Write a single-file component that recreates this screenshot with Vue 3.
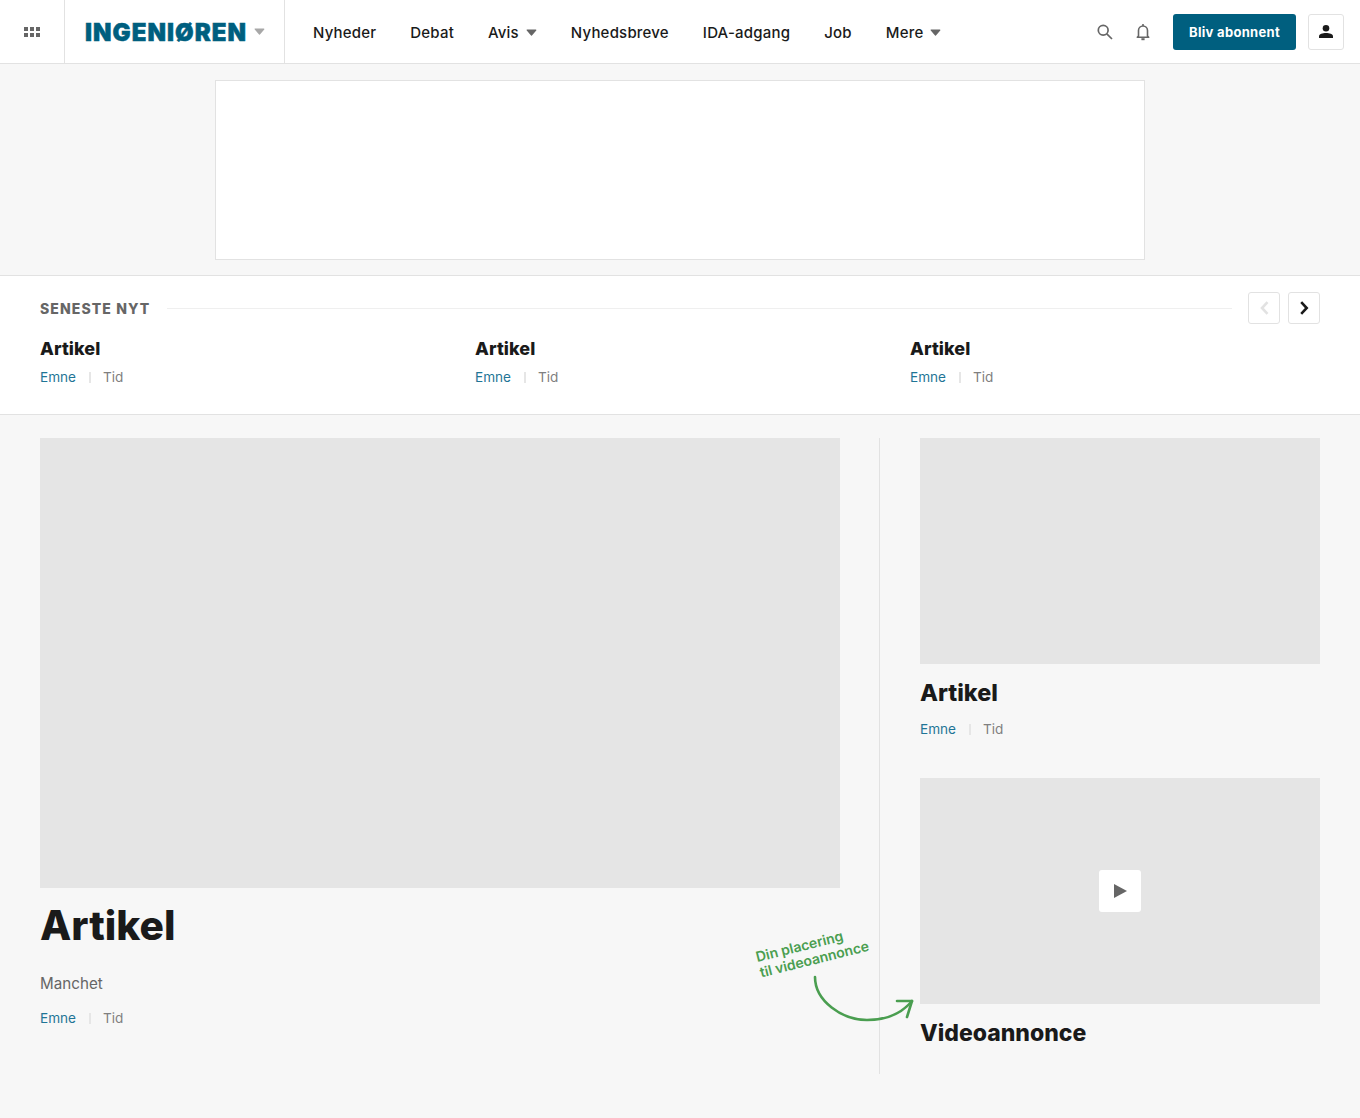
<template>
  <div class="page">
    <header class="topbar">
      <button class="grid-btn" aria-label="Menu">
        <svg width="16" height="11" viewBox="0 0 16 11" fill="#666">
          <rect x="0" y="0" width="4" height="4" /><rect x="6" y="0" width="4" height="4" /><rect x="12" y="0" width="4" height="4" />
          <rect x="0" y="6" width="4" height="4" /><rect x="6" y="6" width="4" height="4" /><rect x="12" y="6" width="4" height="4" />
        </svg>
      </button>
      <div class="brand">
        <span class="logo">INGENIØREN</span>
        <svg class="caret" width="11" height="7" viewBox="0 0 11 7"><path d="M1.2 1h8.6L5.5 6z" fill="#a8a8a8" stroke="#a8a8a8" stroke-width="1.2" stroke-linejoin="round" /></svg>
      </div>
      <nav class="nav">
        <a v-for="item in navItems" :key="item.label" class="nav-item">
          {{ item.label }}
          <svg v-if="item.caret" width="11" height="7" viewBox="0 0 11 7"><path d="M1.2 1h8.6L5.5 6z" fill="#666" stroke="#666" stroke-width="1.2" stroke-linejoin="round" /></svg>
        </a>
      </nav>
      <div class="actions">
        <svg class="ic" width="16" height="16" viewBox="0 0 16 16" fill="none" stroke="#666" stroke-width="1.7">
          <circle cx="6.2" cy="6.2" r="4.9" /><path d="M9.8 9.8l5.2 5.2" />
        </svg>
        <svg class="ic bell" width="14" height="18" viewBox="0 0 14 18" fill="none" stroke="#666" stroke-width="1.6">
          <path d="M2.5 13V7.5a4.5 4.5 0 0 1 9 0V13l1.2 1.2H1.3z" stroke-linejoin="round" />
          <path d="M7 1v2" /><path d="M5.4 16.2h3.2" stroke-width="2" />
        </svg>
        <button class="subscribe">Bliv abonnent</button>
        <button class="user" aria-label="Profil">
          <svg width="14" height="13" viewBox="0 0 14 13" fill="#1a1a1a">
            <circle cx="7" cy="3.3" r="3.3" /><path d="M0 13v-1.8C0 9 3.6 7.9 7 7.9s7 1.1 7 3.3V13z" />
          </svg>
        </button>
      </div>
    </header>

    <div class="ad-wrap"><div class="ad"></div></div>

    <section class="latest">
      <div class="latest-head">
        <h2>SENESTE NYT</h2>
        <span class="rule"></span>
        <button class="arrow" aria-label="Forrige">
          <svg width="9" height="14" viewBox="0 0 9 14" fill="none" stroke="#e2e2e2" stroke-width="2.6"><path d="M7.500 1.200L2 7l5.500 5.800" /></svg>
        </button>
        <button class="arrow" aria-label="Næste">
          <svg width="9" height="14" viewBox="0 0 9 14" fill="none" stroke="#1a1a1a" stroke-width="2.6"><path d="M1.200 1.200L6.700 7l-5.500 5.800" /></svg>
        </button>
      </div>
      <div class="latest-list">
        <article v-for="n in 3" :key="n">
          <h3>Artikel</h3>
          <div class="meta"><span class="topic">Emne</span><i></i><span class="time">Tid</span></div>
        </article>
      </div>
    </section>

    <main class="main">
      <div class="lead">
        <div class="ph lead-img"></div>
        <h1>Artikel</h1>
        <p class="manchet">Manchet</p>
        <div class="meta"><span class="topic">Emne</span><i></i><span class="time">Tid</span></div>
        <div class="note">Din placering<br />til videoannonce</div>
        <svg class="note-arrow" width="104" height="50" viewBox="0 0 104 50" fill="none" stroke="#4a9e50" stroke-width="2.6" stroke-linecap="round" stroke-linejoin="round">
          <path d="M3 1C3 25 30 44 55 44C75 44 90 37 100 25" />
          <path d="M85 25l15 0-5 16" />
        </svg>
      </div>
      <aside class="side">
        <div class="ph side-img"></div>
        <h2 class="side-title">Artikel</h2>
        <div class="meta"><span class="topic">Emne</span><i></i><span class="time">Tid</span></div>
        <div class="ph side-img video">
          <span class="play"><svg width="13" height="14" viewBox="0 0 13 14"><path d="M0 0l13 7-13 7z" fill="#666" /></svg></span>
        </div>
        <h2 class="side-title video-title">Videoannonce</h2>
      </aside>
    </main>
  </div>
</template>

<script setup>
const navItems = [
  { label: 'Nyheder' },
  { label: 'Debat' },
  { label: 'Avis', caret: true },
  { label: 'Nyhedsbreve' },
  { label: 'IDA-adgang' },
  { label: 'Job' },
  { label: 'Mere', caret: true }
];
</script>

<style>
html, body {
  background: #f7f7f7;
}
</style>

<style scoped>
.page {
  min-height: 1118px;
  background: #f7f7f7;
  font-family: Inter, "Liberation Sans", sans-serif;
  color: #1a1a1a;
}
button {
  font-family: inherit;
  cursor: pointer;
}
.topbar {
  display: flex;
  align-items: center;
  height: 64px;
  box-sizing: border-box;
  background: #fff;
  border-bottom: 1px solid #e2e2e2;
}
.grid-btn {
  width: 65px;
  height: 63px;
  box-sizing: border-box;
  padding: 1px 0 0;
  background: none;
  border: 0;
  border-right: 1px solid #e2e2e2;
  display: flex;
  align-items: center;
  justify-content: center;
}
.brand {
  width: 220px;
  height: 63px;
  box-sizing: border-box;
  padding-left: 20px;
  display: flex;
  align-items: center;
  gap: 7px;
  border-right: 1px solid #e2e2e2;
}
.logo {
  font-size: 24px;
  font-weight: 900;
  letter-spacing: 1.05px;
  color: #005f7f;
  -webkit-text-stroke: 0.5px #005f7f;
  width: 162px;
  padding-top: 1px;
  white-space: nowrap;
}
.nav {
  display: flex;
  align-items: center;
  gap: 34px;
  padding: 1px 0 0 28px;
}
.nav-item {
  display: flex;
  align-items: center;
  gap: 7px;
  font-size: 15px;
  font-weight: 500;
  letter-spacing: 0.2px;
  white-space: nowrap;
}
.actions {
  margin-left: auto;
  display: flex;
  align-items: center;
  padding-right: 16px;
}
.ic {
  display: block;
}
.bell {
  margin-left: 23px;
}
.subscribe {
  margin-left: 23px;
  width: 123px;
  height: 36px;
  border: 0;
  border-radius: 3px;
  background: #005f7f;
  color: #fff;
  font-size: 13px;
  font-weight: 700;
  letter-spacing: 0.3px;
}
.user {
  margin-left: 12px;
  width: 36px;
  height: 36px;
  box-sizing: border-box;
  border: 1px solid #e2e2e2;
  border-radius: 3px;
  background: #fff;
  display: flex;
  align-items: center;
  justify-content: center;
  padding: 0;
}
.ad-wrap {
  padding: 16px 0 15px;
  display: flex;
  justify-content: center;
}
.ad {
  width: 930px;
  height: 180px;
  box-sizing: border-box;
  background: #fff;
  border: 1px solid #e2e2e2;
}
.latest {
  height: 140px;
  box-sizing: border-box;
  background: #fff;
  border-top: 1px solid #e2e2e2;
  border-bottom: 1px solid #e2e2e2;
  padding: 16px 40px 0;
}
.latest-head {
  display: flex;
  align-items: center;
  height: 32px;
}
.latest-head h2 {
  margin: 0;
  font-size: 14px;
  font-weight: 800;
  letter-spacing: 1.1px;
  color: #666;
  white-space: nowrap;
}
.rule {
  flex: 1;
  height: 1px;
  background: #efefef;
  margin: 0 16px 0 17px;
}
.arrow {
  width: 32px;
  height: 32px;
  box-sizing: border-box;
  background: #fff;
  border: 1px solid #e2e2e2;
  border-radius: 3px;
  display: flex;
  align-items: center;
  justify-content: center;
  padding: 0;
}
.arrow + .arrow {
  margin-left: 8px;
}
.latest-list {
  display: grid;
  grid-template-columns: repeat(3, 435px);
  margin-top: 13px;
}
.latest-list h3 {
  margin: 0;
  font-size: 18px;
  line-height: 24px;
  font-weight: 800;
  letter-spacing: 0.05px;
}
.latest-list .meta {
  margin-top: 6px;
}
.meta {
  display: flex;
  align-items: center;
  font-size: 13.6px;
  line-height: 20px;
}
.meta i {
  width: 2px;
  height: 11px;
  background: #e6e6e6;
  margin: 0 12px 0 13px;
}
.topic {
  color: #1f7596;
}
.time {
  color: #808080;
}
.main {
  display: flex;
  padding: 23px 40px 0;
}
.ph {
  background: #e5e5e5;
}
.lead {
  position: relative;
  width: 840px;
  padding-right: 40px;
  box-sizing: border-box;
  height: 636px;
  border-right: 1px solid #e2e2e2;
}
.lead-img {
  width: 800px;
  height: 450px;
}
.lead h1 {
  margin: 14px 0 0;
  font-size: 40.7px;
  line-height: 48px;
  font-weight: 800;
}
.manchet {
  margin: 22px 0 0;
  font-size: 15.2px;
  line-height: 24px;
  color: #666;
}
.lead .meta {
  margin-top: 12px;
}
.note {
  position: absolute;
  left: 718px;
  top: 511px;
  font-size: 14px;
  line-height: 16px;
  font-weight: 600;
  color: #4a9e50;
  white-space: nowrap;
  transform: rotate(-14deg);
  transform-origin: left center;
}
.note-arrow {
  position: absolute;
  left: 772px;
  top: 538px;
  overflow: visible;
}
.side {
  width: 400px;
  margin-left: 40px;
}
.side-img {
  height: 226px;
}
.side-title {
  margin: 16px 0 0;
  font-size: 23.4px;
  line-height: 26px;
  font-weight: 800;
}
.video-title {
  font-size: 23px;
}
.side .meta {
  margin-top: 13px;
}
.video {
  margin-top: 39px;
  display: flex;
  align-items: center;
  justify-content: center;
}
.play {
  width: 42px;
  height: 42px;
  background: #fff;
  border-radius: 3px;
  display: flex;
  align-items: center;
  justify-content: center;
}
</style>
